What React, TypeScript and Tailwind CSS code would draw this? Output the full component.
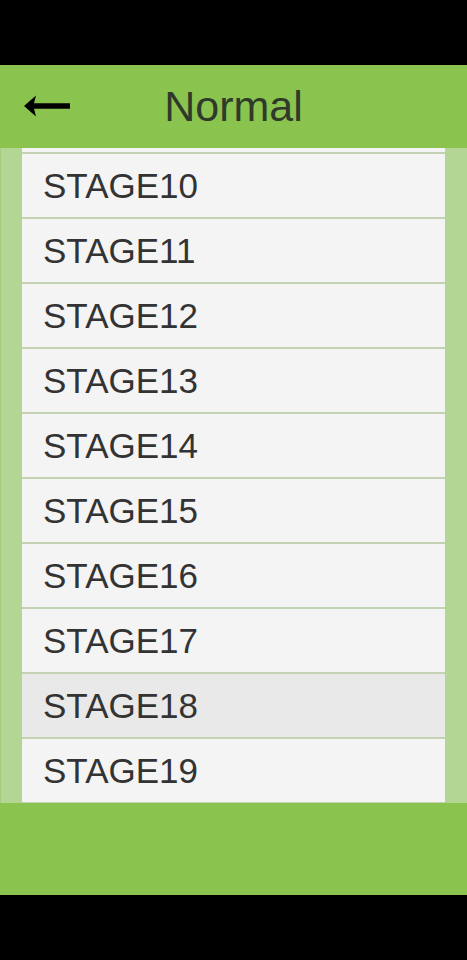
const stages = [
  "STAGE10",
  "STAGE11",
  "STAGE12",
  "STAGE13",
  "STAGE14",
  "STAGE15",
  "STAGE16",
  "STAGE17",
  "STAGE18",
  "STAGE19",
];

function BackArrow() {
  return (
    <svg width="48" height="22" viewBox="0 0 48 22" className="block">
      <path d="M0 11 L12 0.5 L10 8.3 L46 8.3 L46 13.7 L10 13.7 L12 21.5 Z" fill="#000" />
    </svg>
  );
}

export default function App() {
  return (
    <div
      className="flex h-[960px] w-[467px] flex-col bg-black"
      style={{ fontFamily: '"Liberation Sans", Arial, sans-serif' }}
    >
      {/* status bar */}
      <div className="h-[65px] shrink-0 bg-black" />

      {/* Header */}
      <header className="relative flex h-[83px] shrink-0 items-center justify-center bg-[#8bc34f]">
        <button className="absolute left-[24px] top-[30px]">
          <BackArrow />
        </button>
        <h1 className="text-[43px] leading-none text-[#2f3a2a]">Normal</h1>
      </header>

      {/* List (scrolled: only the tail of the previous row shows) */}
      <div className="h-[655px] shrink-0 overflow-hidden border-l border-[#a6cc80] bg-[#b4d694] pl-[21px] pr-[22px]">
        <div className="bg-[#f4f4f4]">
          <div className="h-[6px] border-b-2 border-[#c2d2b2] bg-[#f4f4f4]" />
          {stages.map((s) => (
            <div
              key={s}
              className={`flex h-[65px] items-center border-b-2 border-[#c2d2b2] pl-[21px] text-[35px] leading-none text-[#333333] ${
                s === "STAGE18" ? "bg-[#e9e9e9]" : "bg-[#f4f4f4]"
              }`}
            >
              {s}
            </div>
          ))}
        </div>
      </div>

      {/* Footer */}
      <div className="h-[92px] shrink-0 bg-[#8bc34f]" />
      <div className="flex-1 bg-black" />
    </div>
  );
}
